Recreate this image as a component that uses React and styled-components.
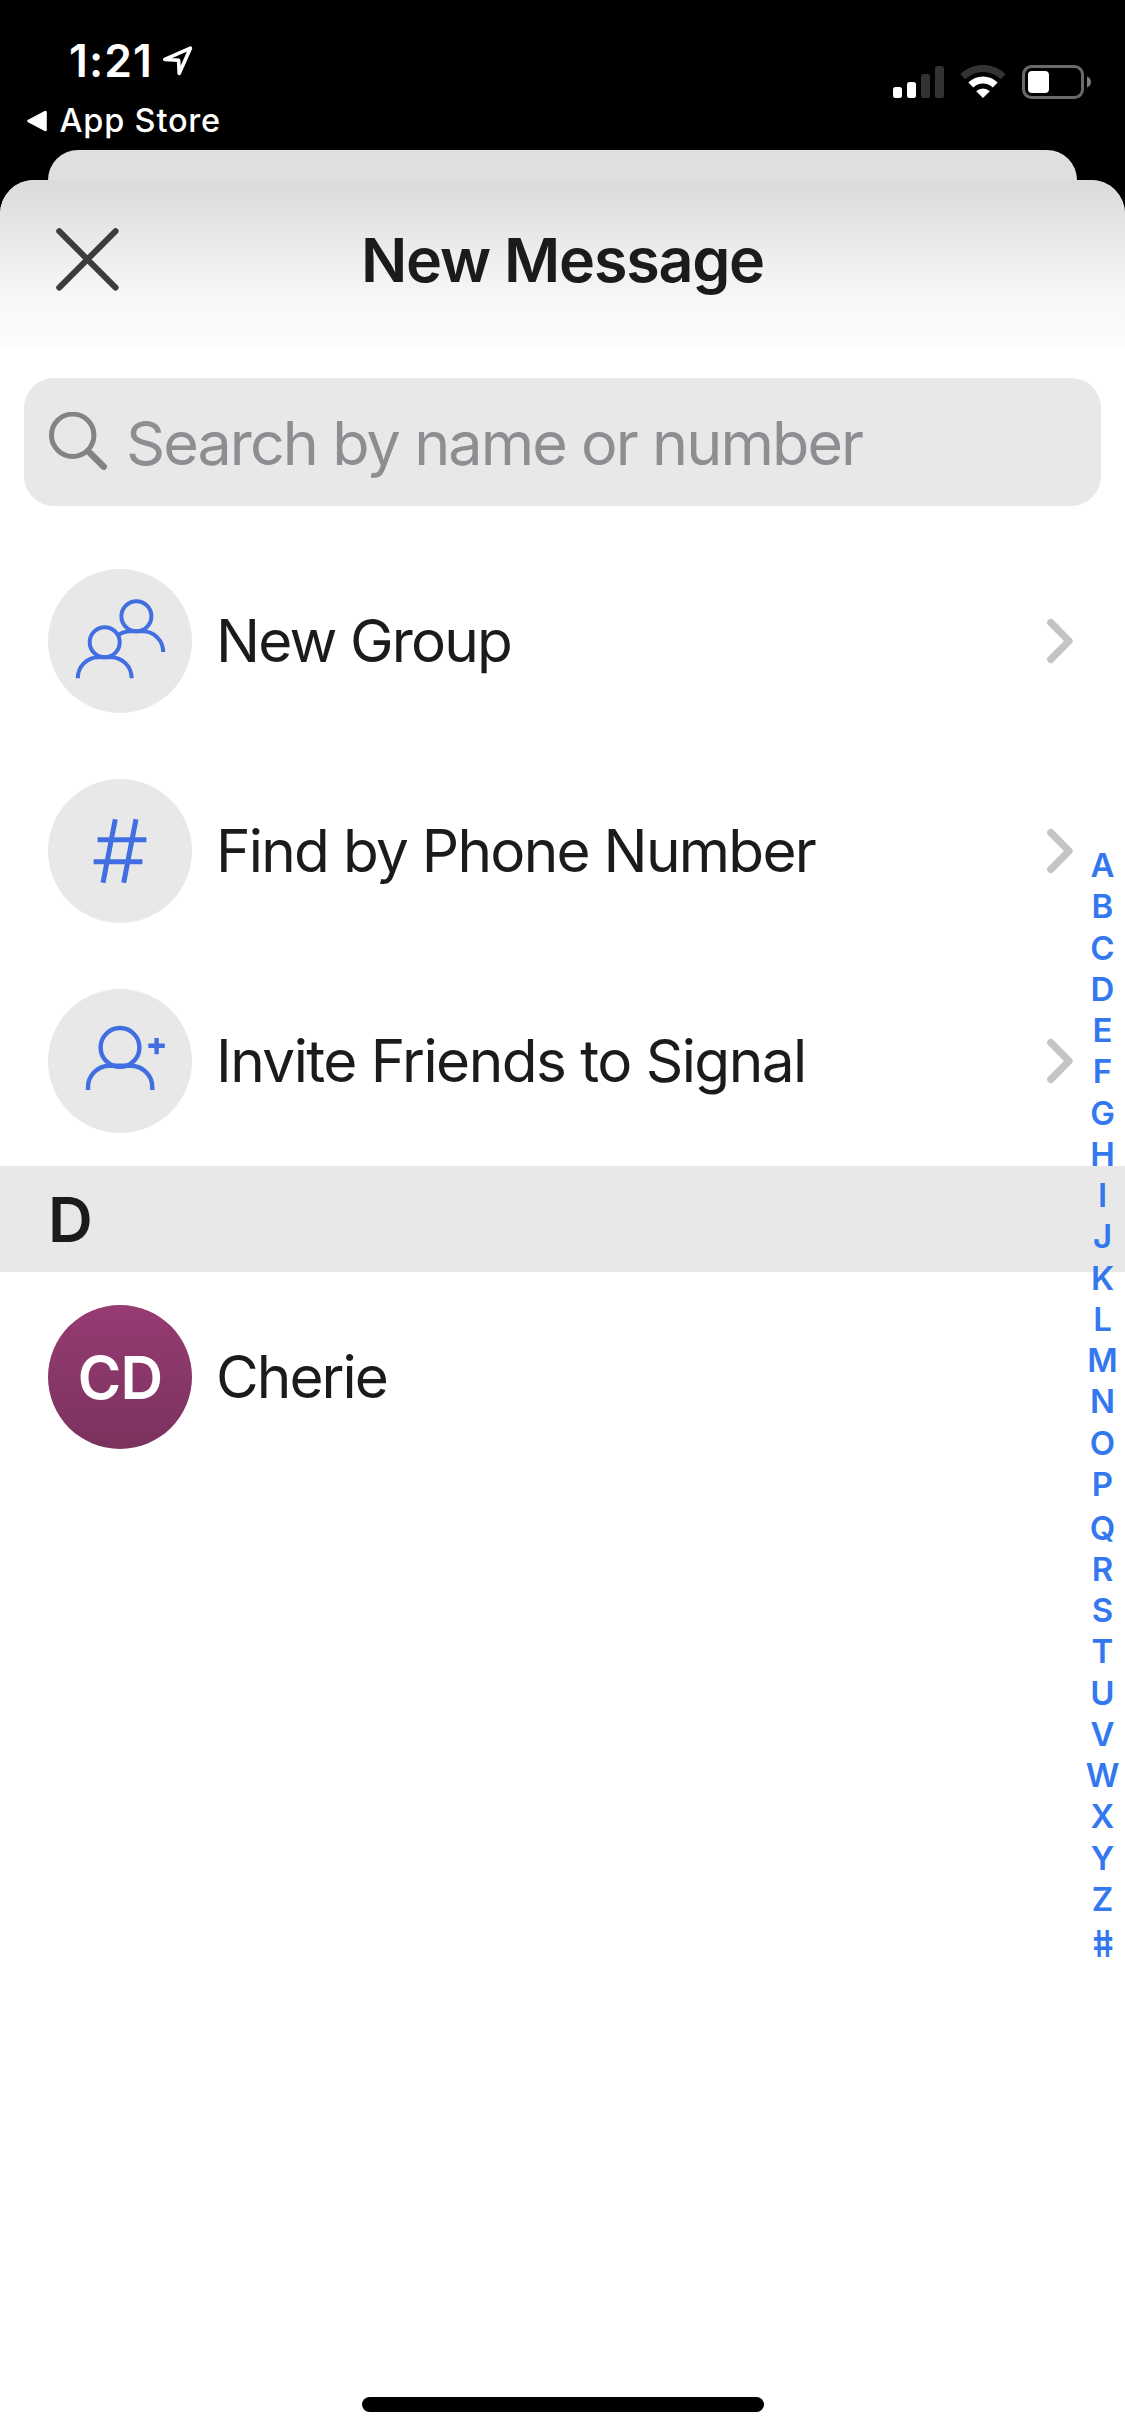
import React from 'react';
import styled, { createGlobalStyle } from 'styled-components';

const GlobalStyle = createGlobalStyle`
  body {
    margin: 0;
    background: #000;
    font-family: 'Inter', 'Liberation Sans', sans-serif;
    color: #1b1b1b;
  }
`;

const Screen = styled.div`
  display: flex;
  flex-direction: column;
  width: 1125px;
  height: 2436px;
  overflow: hidden;
  background-color: #000;
`;

const StatusBar = styled.header`
  display: flex;
  justify-content: space-between;
  height: 150px;
  box-sizing: border-box;
  padding: 34px 33px 0 27px;
  color: #fff;
`;

const StatusLeft = styled.div`
  display: flex;
  flex-direction: column;
`;

const Clock = styled.div`
  display: flex;
  align-items: center;
  gap: 10px;
  height: 54px;
  padding-left: 42px;
  font-size: 44.5px;
  font-weight: 600;
  line-height: 54px;
  letter-spacing: 1.1px;
`;

const BackLink = styled.div`
  display: flex;
  align-items: center;
  gap: 12.5px;
  height: 40px;
  margin-top: 13px;
  font-size: 32.5px;
  font-weight: 500;
  line-height: 40px;
  letter-spacing: 0.8px;
`;

const StatusRight = styled.div`
  display: flex;
  align-items: flex-start;
  gap: 16px;
  padding-top: 31px;
`;

const SheetBehind = styled.div`
  flex: none;
  height: 30px;
  margin: 0 48px;
  border-radius: 30px 30px 0 0;
  background-color: #dfdfdf;
`;

const Sheet = styled.main`
  position: relative;
  flex: 1;
  display: flex;
  flex-direction: column;
  overflow: hidden;
  border-radius: 34px 34px 0 0;
  background-color: #fff;
`;

const NavBar = styled.div`
  display: grid;
  grid-template-columns: 120px 1fr 120px;
  align-items: center;
  height: 168px;
  padding-bottom: 9px;
  box-sizing: border-box;
  background: linear-gradient(#dbdbdb 0%, #e5e5e5 25%, #f0f0f0 50%, #f8f8f8 74%, #fcfcfc 100%);
`;

const CloseButton = styled.button`
  display: flex;
  padding: 0 0 0 56px;
  border: 0;
  background: none;
`;

const Title = styled.h1`
  margin: 0;
  font-size: 61px;
  font-weight: 600;
  line-height: 74px;
  letter-spacing: -1.25px;
  text-align: center;
  white-space: nowrap;
`;

const SearchField = styled.div`
  display: flex;
  align-items: center;
  gap: 18px;
  height: 128px;
  margin: 30px 24px;
  padding-left: 24px;
  box-sizing: border-box;
  border-radius: 30px;
  background-color: #e8e8e8;
`;

const Placeholder = styled.span`
  padding-top: 2px;
  font-size: 61px;
  line-height: 74px;
  letter-spacing: -1.9px;
  color: #8e8e92;
`;

const Row = styled.div`
  display: flex;
  align-items: center;
  gap: 24px;
  height: 210px;
  box-sizing: border-box;
  padding: 0 50px 0 48px;
`;

const Avatar = styled.div`
  display: flex;
  align-items: center;
  justify-content: center;
  flex: none;
  width: 144px;
  height: 144px;
  border-radius: 50%;
  background: ${({ $filled }) => ($filled ? 'linear-gradient(#963b72, #7b325d)' : '#e8e8e8')};
  color: #fff;
  font-size: 59px;
  font-weight: 600;
  letter-spacing: -0.8px;
`;

const RowLabel = styled.span`
  flex: 1;
  font-size: 58.5px;
  line-height: 72px;
  letter-spacing: ${({ $tracking }) => $tracking}px;
`;

const SectionHeader = styled.h2`
  display: flex;
  align-items: center;
  height: 106px;
  margin: 0;
  padding-left: 48px;
  font-size: 62px;
  font-weight: 600;
  background-color: #e8e8e8;
`;

const IndexBar = styled.nav`
  position: absolute;
  top: 665px;
  right: 0;
  display: flex;
  flex-direction: column;
  align-items: center;
  width: 45px;
`;

const IndexLetter = styled.span`
  height: 41.25px;
  padding-top: ${({ $gap }) => $gap || 0}px;
  font-size: 33px;
  font-weight: 600;
  line-height: 41.25px;
  color: #3478f0;
`;

const IndexHash = styled(IndexLetter)`
  padding-top: 3px;
  font-size: 37px;
  transform: skewX(9deg) scaleX(0.88);
`;

const HomeIndicator = styled.div`
  width: 402px;
  height: 15px;
  margin: auto auto 24px;
  border-radius: 8px;
  background-color: #000;
`;

const LocationArrow = () => (
  <svg width="30" height="30" viewBox="0 0 30 30" fill="none" stroke="#fff" strokeWidth="3.6" strokeLinejoin="round">
    <path d="M1.8 13.4 L27.4 2.2 L16.2 27.4 L15.6 14.2 Z" />
  </svg>
);

const BackTriangle = () => (
  <svg width="20" height="22" viewBox="0 0 20 22" fill="#fff" stroke="#fff" strokeWidth="3" strokeLinejoin="round">
    <path d="M1.8 11 L18.3 2.3 V19.7 Z" />
  </svg>
);

const CellBars = () => (
  <svg width="51" height="33" viewBox="0 0 51 33">
    <rect x="0" y="22" width="9" height="11" rx="2.5" fill="#fff" />
    <rect x="14" y="17" width="9" height="16" rx="2.5" fill="#fff" />
    <rect x="28" y="9" width="9" height="24" rx="2.5" fill="#333" />
    <rect x="42" y="1" width="9" height="32" rx="2.5" fill="#333" />
  </svg>
);

const Wifi = () => (
  <svg width="46" height="33" viewBox="0 0 46 33">
    <path d="M2.8 11.8 A28.5 28.5 0 0 1 43.2 11.8" fill="none" stroke="#333" strokeWidth="7" />
    <path d="M10.8 20 A17.3 17.3 0 0 1 35.2 20" fill="none" stroke="#fff" strokeWidth="7" />
    <path d="M23 33 L16.2 26.2 A9.6 9.6 0 0 1 29.8 26.2 Z" fill="#fff" />
  </svg>
);

const Battery = () => (
  <svg width="70" height="34" viewBox="0 0 70 34">
    <rect x="1.5" y="1.5" width="59" height="31" rx="8" fill="none" stroke="#6a6a6a" strokeWidth="3" />
    <rect x="6" y="6" width="21" height="22" rx="4" fill="#fff" />
    <path d="M65 11.5 C70.3 13.5 70.3 20.5 65 22.5 Z" fill="#7d7d7d" />
  </svg>
);

const CloseIcon = () => (
  <svg width="63" height="63" viewBox="0 0 63 63" stroke="#3c3c3c" strokeWidth="6" strokeLinecap="round">
    <path d="M3.2 3.2 L59.6 59.6 M59.6 3.2 L3.2 59.6" />
  </svg>
);

const SearchIcon = () => (
  <svg width="60" height="60" viewBox="0 0 60 60" fill="none" stroke="#838385" strokeLinecap="round">
    <circle cx="24.7" cy="23.3" r="21.2" strokeWidth="5" />
    <path d="M40.5 39.5 L55.7 54.6" strokeWidth="6.6" />
  </svg>
);

const IconSvg = styled.svg`
  width: 144px;
  height: 144px;
  fill: none;
  stroke: #416fe2;
  stroke-width: ${({ $weight }) => $weight || 4}px;
`;

const GroupIcon = () => (
  <IconSvg viewBox="0 0 144 144">
    <circle cx="88.4" cy="47.3" r="15" />
    <path d="M70 66.3 Q75 62.4 83 62.3 H94.5 A20.6 20.6 0 0 1 115.2 83" />
    <circle cx="56.7" cy="73.3" r="15" />
    <path d="M29.8 109.3 A20.6 20.8 0 0 1 50.4 88.3 H63 A20.6 20.8 0 0 1 83.6 109.3" />
  </IconSvg>
);

const HashIcon = () => (
  <IconSvg viewBox="0 0 144 144" $weight={5}>
    <path d="M67.3 40.3 L55 103.7 M88 40.3 L75.7 103.7 M49.6 60.7 H98.4 M45.6 82.7 H94.4" />
  </IconSvg>
);

const InviteIcon = () => (
  <IconSvg viewBox="0 0 144 144" $weight={4.4}>
    <circle cx="72" cy="58.4" r="19.4" />
    <path d="M40 101 V98 A21.5 21.3 0 0 1 61.5 76.7 H82.8 A21.5 21.3 0 0 1 104.3 98 V101" />
    <path d="M100.3 56.8 H116.8 M108.6 49 V65.3" />
  </IconSvg>
);

const Chevron = () => (
  <svg width="28" height="46" viewBox="0 0 28 46" fill="none" stroke="#c4c4c6" strokeWidth="7.2" strokeLinecap="round" strokeLinejoin="round">
    <path d="M3.8 4.6 L22 23 L3.8 41.4" />
  </svg>
);

const actions = [
  { label: 'New Group', Icon: GroupIcon, tracking: -1.85 },
  { label: 'Find by Phone Number', Icon: HashIcon, tracking: -1.72 },
  { label: 'Invite Friends to Signal', Icon: InviteIcon, tracking: -1.54 },
];

const letters = 'ABCDEFGHIJKLMNOPQRSTUVWXYZ'.split('');

const App = () => {
  return (
    <Screen>
      <GlobalStyle />
      <StatusBar>
        <StatusLeft>
          <Clock>
            1:21
            <LocationArrow />
          </Clock>
          <BackLink>
            <BackTriangle />
            App Store
          </BackLink>
        </StatusLeft>
        <StatusRight>
          <CellBars />
          <Wifi />
          <Battery />
        </StatusRight>
      </StatusBar>
      <SheetBehind />
      <Sheet>
        <NavBar>
          <CloseButton aria-label="Close">
            <CloseIcon />
          </CloseButton>
          <Title>New Message</Title>
        </NavBar>
        <SearchField>
          <SearchIcon />
          <Placeholder>Search by name or number</Placeholder>
        </SearchField>
        {actions.map(({ label, Icon, tracking }) => (
          <Row key={label}>
            <Avatar>
              <Icon />
            </Avatar>
            <RowLabel $tracking={tracking}>{label}</RowLabel>
            <Chevron />
          </Row>
        ))}
        <SectionHeader>D</SectionHeader>
        <Row>
          <Avatar $filled>CD</Avatar>
          <RowLabel $tracking={-1.95}>Cherie</RowLabel>
        </Row>
        <IndexBar>
          {letters.map((letter) => (
            <IndexLetter key={letter} $gap={letter === 'Q' ? 2.5 : 0}>
              {letter}
            </IndexLetter>
          ))}
          <IndexHash>#</IndexHash>
        </IndexBar>
        <HomeIndicator />
      </Sheet>
    </Screen>
  );
};

export default App;
